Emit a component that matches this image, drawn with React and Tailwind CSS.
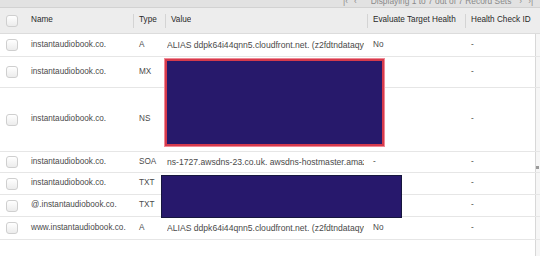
import React from 'react';

// record sets shown in the hosted zone table
const records = [
  { name: 'instantaudiobook.co.', type: 'A', value: 'ALIAS ddpk64i44qnn5.cloudfront.net. (z2fdtndataqyw', evaluate: 'No', health: '-', h: 'h-[23px]' },
  { name: 'instantaudiobook.co.', type: 'MX', value: '', evaluate: '', health: '-', h: 'h-[31px]' },
  { name: 'instantaudiobook.co.', type: 'NS', value: '', evaluate: '', health: '-', h: 'h-[64px]' },
  { name: 'instantaudiobook.co.', type: 'SOA', value: 'ns-1727.awsdns-23.co.uk. awsdns-hostmaster.amaz', evaluate: '-', health: '-', h: 'h-[21px]' },
  { name: 'instantaudiobook.co.', type: 'TXT', value: '', evaluate: '', health: '-', h: 'h-[22px]' },
  { name: '@.instantaudiobook.co.', type: 'TXT', value: '', evaluate: '', health: '-', h: 'h-[22px]' },
  { name: 'www.instantaudiobook.co.', type: 'A', value: 'ALIAS ddpk64i44qnn5.cloudfront.net. (z2fdtndataqyw', evaluate: 'No', health: '-', h: 'h-[23px]' },
];

const cols = 'grid grid-cols-[25px_108px_32px_202px_98px_70px_5px]';

const Checkbox = () => (
  <div className="ml-[6px] w-[12px] h-[12px] rounded-[3px] border border-[#cfcfcf] bg-gradient-to-b from-white to-[#ececec]" />
);

const HeaderCell = ({ children }) => (
  <div className="flex items-center h-full">
    <div className="flex items-center h-[14px] border-l border-[#d4d4d4] pl-[5px] whitespace-nowrap overflow-hidden">
      {children}
    </div>
  </div>
);

export default function App() {
  return (
    <div className="relative w-[540px] h-[256px] overflow-hidden bg-white font-['Liberation_Sans',Arial,sans-serif] text-[8.2px]">
      {/* pagination strip, cut off at the top */}
      <div className="h-[8px] bg-[#e2e2e2] border-b border-[#d2d2d2] overflow-hidden">
        <div className="flex items-center mt-[-5px] ml-[343px] text-[#8a8a8a] text-[8.4px] gap-[6px]">
          <span>|&lsaquo;</span>
          <span>&lsaquo;</span>
          <span className="ml-[8px]">Displaying 1 to 7 out of 7 Record Sets</span>
          <span className="ml-[2px]">&rsaquo;</span>
          <span>&rsaquo;|</span>
        </div>
      </div>

      {/* header */}
      <div className={`${cols} h-[26px] bg-[#ededed] border-b border-[#dcdcdc] text-[#2a2a2a] items-center`}>
        <div className="flex items-center"><Checkbox /></div>
        <div className="pl-[6px]">Name</div>
        <HeaderCell>Type</HeaderCell>
        <HeaderCell>Value</HeaderCell>
        <HeaderCell>Evaluate Target Health</HeaderCell>
        <HeaderCell>Health Check ID</HeaderCell>
        <div />
      </div>

      {/* rows */}
      {records.map((r, i) => (
        <div key={i} className={`${cols} ${r.h} border-b border-[#e6e6e6] text-[#4a4a4a] items-center`}>
          <div className="flex items-center"><Checkbox /></div>
          <div className="pl-[6px] whitespace-nowrap overflow-hidden">{r.name}</div>
          <div className="pl-[6px]">{r.type}</div>
          <div className="pl-[2px] pr-[3px]">
            <div className="whitespace-nowrap overflow-hidden text-[8.6px]">{r.value}</div>
          </div>
          <div className="pl-[6px]">{r.evaluate}</div>
          <div className="pl-[6px]">{r.health}</div>
          <div className="h-full border-l border-[#d8d8d8] bg-[#f6f6f6]" />
        </div>
      ))}
      <div className={`${cols} h-[20px]`}>
        <div /><div /><div /><div /><div /><div />
        <div className="h-full border-l border-[#d8d8d8] bg-[#f6f6f6]" />
      </div>

      {/* scrollbar mark */}
      <div className="absolute left-[536px] top-[166px] w-[3px] h-[3px] bg-[#9a9a9a]" />

      {/* redacted values */}
      <div className="absolute left-[165px] top-[59px] w-[219px] h-[87px] bg-[#27196b] border-2 border-[#d63a4c] outline outline-1 outline-[#ef8a96]" />
      <div className="absolute left-[161px] top-[175px] w-[241px] h-[43px] bg-[#27186c] border border-[#16163e]" />
    </div>
  );
}
